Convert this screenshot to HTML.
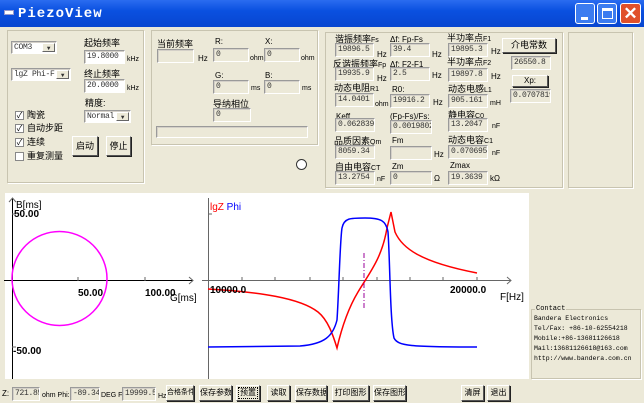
<!DOCTYPE html>
<html><head><meta charset="utf-8"><style>
*{margin:0;padding:0;box-sizing:border-box}
body{width:644px;height:403px;background:#ece9d8;position:relative;overflow:hidden;font-family:"Liberation Sans","Noto Sans CJK SC",sans-serif;font-size:9px;color:#000}
.a{position:absolute;white-space:nowrap;line-height:10px}
.f{position:absolute;border:1px solid #9a9a9a;border-right-color:#fff;border-bottom-color:#fff;box-shadow:inset 1px 1px 0 #d4d0c8;background:#ece9d8;font-family:"Liberation Mono",monospace;font-size:8px;letter-spacing:-0.3px;line-height:11px;padding-left:2px;white-space:nowrap;overflow:hidden;color:#333}
.w{background:#fff}
.g{position:absolute;border:1px solid #c8c4b0;box-shadow:1px 1px 0 #fff}
.b{position:absolute;background:#ece9d8;border:1px solid #fff;border-right-color:#555;border-bottom-color:#555;box-shadow:1px 1px 0 #222;text-align:center;font-size:8px;white-space:nowrap;overflow:hidden}
.cb{position:absolute;width:9px;height:9px;border:1px solid #888;background:#fff;font-size:8px;line-height:7px;text-align:center}
.dd{position:absolute;right:1px;top:1px;bottom:1px;width:13px;background:#ece9d8;border:1px solid #fff;border-right-color:#666;border-bottom-color:#666;font-size:6px;text-align:center;line-height:9px}
</style></head><body>
<div style="position:absolute;left:0;top:0;width:644px;height:27px;background:linear-gradient(#2a6cf0,#0a50e0 40%,#0846d0)"></div>
<div class="a" style="left:4px;top:10px;width:10px;height:5px;background:#fff;border:1px solid #99c"></div>
<div class="a" style="left:18px;top:6px;font-family:'Liberation Mono',monospace;font-size:14px;line-height:16px;color:#fff;font-weight:bold;letter-spacing:1px">PiezoView</div>
<div class="a" style="left:575px;top:3px;width:20px;height:21px;background:#3c7cf0;border:1px solid #fff;border-radius:3px"><div style="position:absolute;left:5px;top:13px;width:7px;height:3px;background:#fff"></div></div>
<div class="a" style="left:597px;top:3px;width:20px;height:21px;background:#3c7cf0;border:1px solid #fff;border-radius:3px"><div style="position:absolute;left:4px;top:4px;width:11px;height:11px;border:1px solid #fff;border-top-width:3px"></div></div>
<div class="a" style="left:620px;top:3px;width:21px;height:21px;background:#e0502a;border:1px solid #fff;border-radius:3px;color:#fff;font:bold 17px/19px 'Liberation Sans',sans-serif;text-align:center">✕</div>

<div class="g" style="left:7px;top:30px;width:137px;height:153px"></div>
<div class="f w" style="left:11px;top:41px;width:46px;height:13px">COM3<div class="dd">▼</div></div>
<div class="f w" style="left:11px;top:68px;width:60px;height:13px">lgZ Phi-F<div class="dd">▼</div></div>
<div class="a" style="left:84px;top:38px">起始频率</div>
<div class="f w" style="left:84px;top:50px;width:41px;height:14px">19.8000</div><div class="a" style="left:127px;top:55px;font-size:7px">kHz</div>
<div class="a" style="left:84px;top:69px">终止频率</div>
<div class="f w" style="left:84px;top:79px;width:41px;height:14px">20.0000</div><div class="a" style="left:127px;top:84px;font-size:7px">kHz</div>
<div class="a" style="left:85px;top:98px">精度:</div>
<div class="f w" style="left:84px;top:110px;width:47px;height:13px">Normal<div class="dd">▼</div></div>
<div class="cb" style="left:15px;top:111px">✓</div><div class="a" style="left:27px;top:110px">陶瓷</div>
<div class="cb" style="left:15px;top:124px">✓</div><div class="a" style="left:27px;top:123px">自动步距</div>
<div class="cb" style="left:15px;top:138px">✓</div><div class="a" style="left:27px;top:137px">连续</div>
<div class="cb" style="left:15px;top:152px"></div><div class="a" style="left:27px;top:151px">重复测量</div>
<div class="b" style="left:72px;top:136px;width:26px;height:20px;line-height:18px;font-size:9px">启动</div>
<div class="b" style="left:106px;top:136px;width:25px;height:20px;line-height:18px;font-size:9px">停止</div>

<div class="g" style="left:151px;top:30px;width:167px;height:115px"></div>
<div class="a" style="left:157px;top:39px">当前频率</div>
<div class="f" style="left:157px;top:49px;width:37px;height:14px"></div><div class="a" style="left:198px;top:54px;font-size:8px">Hz</div>
<div class="a" style="left:215px;top:37px;font-size:8px">R:</div><div class="a" style="left:265px;top:37px;font-size:8px">X:</div>
<div class="f" style="left:213px;top:48px;width:36px;height:14px">0</div><div class="a" style="left:250px;top:54px;font-size:7px">ohm</div>
<div class="f" style="left:264px;top:48px;width:36px;height:14px">0</div><div class="a" style="left:301px;top:54px;font-size:7px">ohm</div>
<div class="a" style="left:215px;top:71px;font-size:8px">G:</div><div class="a" style="left:265px;top:71px;font-size:8px">B:</div>
<div class="f" style="left:213px;top:80px;width:36px;height:14px">0</div><div class="a" style="left:251px;top:84px;font-size:7px">ms</div>
<div class="f" style="left:264px;top:80px;width:36px;height:14px">0</div><div class="a" style="left:302px;top:84px;font-size:7px">ms</div>
<div class="a" style="left:213px;top:99px">导纳相位</div>
<div class="f" style="left:213px;top:108px;width:38px;height:14px">0</div>
<div class="f" style="left:156px;top:126px;width:152px;height:12px"></div>
<div class="a" style="left:296px;top:159px;width:11px;height:11px;border:1px solid #333;border-radius:50%;background:#fff"></div>

<div class="g" style="left:325px;top:32px;width:238px;height:156px"></div>
<div class="a" style="left:335px;top:34px">谐振频率<span style="font-size:7px">Fs</span></div>
<div class="a" style="left:390px;top:35px;font-size:8px">Δf: Fp-Fs</div>
<div class="a" style="left:447px;top:33px">半功率点<span style="font-size:7px">F1</span></div>
<div class="f" style="left:335px;top:43px;width:39px;height:14px">19896.5</div><div class="a" style="left:377px;top:50px;font-size:8px">Hz</div>
<div class="f" style="left:390px;top:43px;width:40px;height:14px">39.4</div><div class="a" style="left:432px;top:50px;font-size:8px">Hz</div>
<div class="f" style="left:448px;top:43px;width:40px;height:14px">19895.3</div><div class="a" style="left:491px;top:47px;font-size:8px">Hz</div>
<div class="b" style="left:502px;top:38px;width:54px;height:15px;line-height:13px;font-size:9px">介电常数</div>
<div class="f" style="left:511px;top:56px;width:40px;height:14px">26550.8</div>
<div class="a" style="left:333px;top:59px">反谐振频率<span style="font-size:7px">Fp</span></div>
<div class="a" style="left:390px;top:60px;font-size:8px">Δf: F2-F1</div>
<div class="a" style="left:447px;top:57px">半功率点<span style="font-size:7px">F2</span></div>
<div class="f" style="left:335px;top:67px;width:39px;height:14px">19935.9</div><div class="a" style="left:377px;top:74px;font-size:8px">Hz</div>
<div class="f" style="left:390px;top:67px;width:40px;height:14px">2.5</div><div class="a" style="left:432px;top:71px;font-size:8px">Hz</div>
<div class="f" style="left:448px;top:68px;width:40px;height:14px">19897.8</div><div class="a" style="left:491px;top:72px;font-size:8px">Hz</div>
<div class="b" style="left:512px;top:75px;width:36px;height:12px;line-height:10px;font-size:8px">Xp:</div>
<div class="f" style="left:510px;top:89px;width:41px;height:14px">0.0707819</div>
<div class="a" style="left:334px;top:83px">动态电阻<span style="font-size:7px">R1</span></div>
<div class="a" style="left:392px;top:85px;font-size:8px">R0:</div>
<div class="a" style="left:448px;top:84px">动态电感<span style="font-size:7px">L1</span></div>
<div class="f" style="left:335px;top:93px;width:39px;height:14px">14.0401</div><div class="a" style="left:375px;top:100px;font-size:7px">ohm</div>
<div class="f" style="left:390px;top:94px;width:40px;height:14px">19916.2</div><div class="a" style="left:433px;top:98px;font-size:8px">Hz</div>
<div class="f" style="left:448px;top:94px;width:40px;height:14px">905.161</div><div class="a" style="left:490px;top:99px;font-size:7px">mH</div>
<div class="a" style="left:336px;top:112px;font-size:8px">Keff</div>
<div class="a" style="left:390px;top:112px;font-size:8px">(Fp-Fs)/Fs:</div>
<div class="a" style="left:448px;top:110px">静电容<span style="font-size:7px">C0</span></div>
<div class="f" style="left:335px;top:118px;width:40px;height:14px">0.062839</div>
<div class="f" style="left:390px;top:120px;width:42px;height:14px">0.00198027</div>
<div class="f" style="left:448px;top:118px;width:40px;height:14px">13.2047</div><div class="a" style="left:492px;top:122px;font-size:7px">nF</div>
<div class="a" style="left:334px;top:136px">品质因素<span style="font-size:7px">Qm</span></div>
<div class="a" style="left:392px;top:136px;font-size:8px">Fm</div>
<div class="a" style="left:448px;top:135px">动态电容<span style="font-size:7px">C1</span></div>
<div class="f" style="left:335px;top:145px;width:40px;height:14px">8059.34</div>
<div class="f" style="left:390px;top:146px;width:42px;height:14px"></div><div class="a" style="left:434px;top:150px;font-size:8px">Hz</div>
<div class="f" style="left:448px;top:145px;width:40px;height:14px">0.070695</div><div class="a" style="left:492px;top:149px;font-size:7px">nF</div>
<div class="a" style="left:335px;top:162px">自由电容<span style="font-size:7px">CT</span></div>
<div class="a" style="left:392px;top:162px;font-size:8px">Zm</div>
<div class="a" style="left:450px;top:161px;font-size:8px">Zmax</div>
<div class="f" style="left:335px;top:171px;width:40px;height:14px">13.2754</div><div class="a" style="left:377px;top:175px;font-size:7px">nF</div>
<div class="f" style="left:390px;top:171px;width:42px;height:14px">0</div><div class="a" style="left:434px;top:174px;font-size:8px">Ω</div>
<div class="f" style="left:448px;top:171px;width:40px;height:14px">19.3639</div><div class="a" style="left:490px;top:174px;font-size:8px">kΩ</div>
<div class="g" style="left:568px;top:32px;width:65px;height:156px"></div>

<svg style="position:absolute;left:0;top:0" width="644" height="403">
<rect x="5" y="193" width="524" height="186" fill="#fff"/>
<g stroke="#000" stroke-width="1" fill="none">
<line x1="12.5" y1="198" x2="12.5" y2="379"/><line x1="4" y1="280.5" x2="193" y2="280.5"/>
<path d="M9 202 L12.5 198 L16 202 M189 277 L193 280.5 L189 284" stroke="#666"/>
<line x1="208.5" y1="198" x2="208.5" y2="379" stroke="#666"/><line x1="202" y1="280.5" x2="511" y2="280.5" stroke="#666"/>
<path d="M507 277 L511 280.5 L507 284" stroke="#666"/>
<g stroke="#666"><line x1="242" y1="277" x2="242" y2="281"/><line x1="275" y1="277" x2="275" y2="281"/><line x1="310" y1="277" x2="310" y2="281"/><line x1="343" y1="277" x2="343" y2="281"/><line x1="377" y1="277" x2="377" y2="281"/><line x1="410" y1="277" x2="410" y2="281"/><line x1="443" y1="277" x2="443" y2="281"/><line x1="477" y1="277" x2="477" y2="281"/><line x1="78" y1="277" x2="78" y2="281"/><line x1="145" y1="277" x2="145" y2="281"/><line x1="12" y1="214" x2="16" y2="214"/><line x1="12" y1="347" x2="16" y2="347"/><line x1="208" y1="214" x2="212" y2="214"/></g>
</g>
<ellipse cx="59.5" cy="278.5" rx="47.5" ry="47" stroke="#ff00ff" stroke-width="1.5" fill="none"/>
<path d="M208 289 C260 292 300 298 318 312 C328 320 333 335 337 348 C340 335 346 312 358 292 C370 272 382 258 387 228 L391 212 L395 232 C402 248 420 262 477 273" stroke="#f00" stroke-width="1.5" fill="none"/>
<path d="M208 347 L300 346 C325 344 333 336 337 320 C339 290 340 240 342 228 C344 218 350 218 365 218 C380 218 386 220 388 232 C390 260 390 320 394 338 C398 346 410 347 477 347" stroke="#00f" stroke-width="1.5" fill="none"/>
<line x1="364" y1="253" x2="364" y2="308" stroke="#909" stroke-dasharray="5,2,1,2"/>
<g font-family="Liberation Sans,sans-serif" font-size="10" font-weight="bold" fill="#000">
<text x="16" y="208" font-weight="normal">B[ms]</text><text x="14" y="217">50.00</text><text x="13" y="354">-50.00</text>
<text x="78" y="296">50.00</text><text x="145" y="296">100.00</text><text x="170" y="301" font-weight="normal">G[ms]</text>
<text x="210" y="293">10000.0</text><text x="450" y="293">20000.0</text><text x="500" y="300" font-weight="normal">F[Hz]</text>
<text x="210" y="210" fill="#f00" font-weight="normal">lgZ <tspan fill="#00f">Phi</tspan></text>
</g>
</svg>

<div class="g" style="left:531px;top:309px;width:110px;height:70px"></div>
<div class="a" style="left:535px;top:304px;background:#ece9d8;font-family:'Liberation Mono',monospace;font-size:7px;padding:0 1px">Contact</div>
<div style="position:absolute;left:534px;top:314px;font-family:'Liberation Mono',monospace;font-size:6.5px;line-height:10px;white-space:nowrap">Bandera Electronics<br>Tel/Fax: +86-10-62554218<br>Mobile:+86-13681126618<br>Mail:13681126618@163.com<br>http://www.bandera.com.cn</div>

<div class="a" style="left:2px;top:389px;font-size:8px">Z:</div>
<div class="f" style="left:12px;top:387px;width:28px;height:14px">721.85</div>
<div class="a" style="left:42px;top:391px;font-size:7px">ohm Phi:</div>
<div class="f" style="left:70px;top:387px;width:30px;height:14px">-89.3448</div>
<div class="a" style="left:101px;top:391px;font-size:7px">DEG F:</div>
<div class="f" style="left:122px;top:387px;width:34px;height:14px">19999.5</div>
<div class="a" style="left:158px;top:392px;font-size:7px">Hz</div>
<div class="b" style="left:166px;top:385px;width:28px;height:16px;line-height:14px;font-size:7px">合格条件</div>
<div class="b" style="left:199px;top:385px;width:33px;height:16px;line-height:14px">保存参数</div>
<div class="b" style="left:236px;top:385px;width:24px;height:16px;line-height:14px;outline:1px dotted #000;outline-offset:-3px">预置</div>
<div class="b" style="left:267px;top:385px;width:23px;height:16px;line-height:14px">读取</div>
<div class="b" style="left:295px;top:385px;width:32px;height:16px;line-height:14px">保存数据</div>
<div class="b" style="left:332px;top:385px;width:37px;height:16px;line-height:14px">打印图形</div>
<div class="b" style="left:373px;top:385px;width:33px;height:16px;line-height:14px">保存图形</div>
<div class="b" style="left:461px;top:385px;width:23px;height:16px;line-height:14px">清屏</div>
<div class="b" style="left:487px;top:385px;width:23px;height:16px;line-height:14px">退出</div>
</body></html>
